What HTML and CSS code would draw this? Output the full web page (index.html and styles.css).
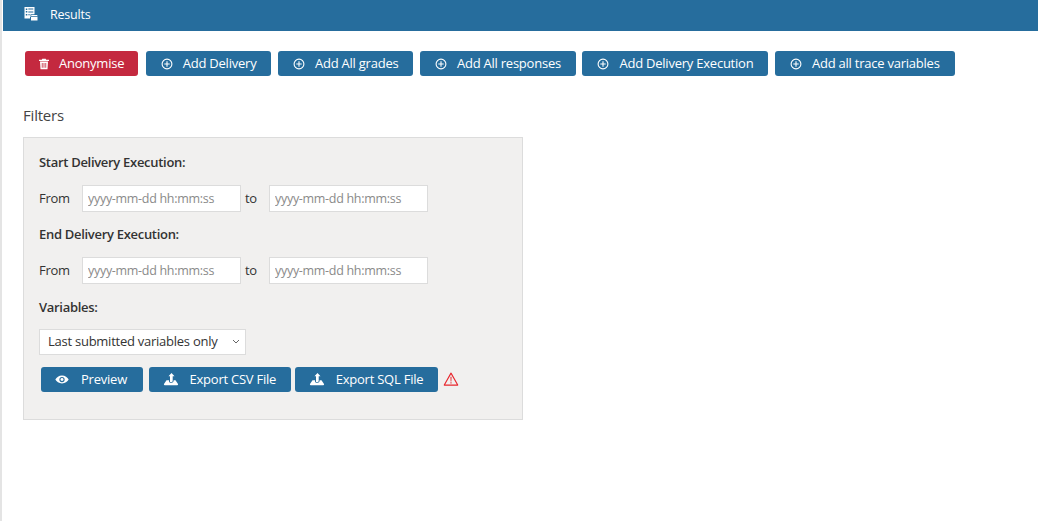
FILE: index.html
```html
<!DOCTYPE html>
<html lang="en">
<head>
<meta charset="utf-8">
<title>Results</title>
<link rel="stylesheet" href="styles.css">
</head>
<body>
<div class="page">
  <header class="bar">
    <svg class="bar-icon" viewBox="0 0 14 14" width="14" height="14"><path fill="#fff" fill-rule="evenodd" d="M.5 0h10v7.200H6.500V10H6v1.500H.5zM1.800 1.400v1.500h1.500V1.400zm2.500.2v1h5v-1zM1.800 4.100v1.500h1.500V4.100zm2.500.3v1h5v-1zM1.800 6.900v1.500h1.500V6.900zm2.500.3v1h1.500v-1z"/><path fill="#fff" d="M7.500 8h5.500l.8 1.300H6.800zM7 10h6.500v3.500H7z"/></svg>
    <span>Results</span>
  </header>
  <main class="content">
    <div class="actions">
      <button class="btn btn-danger"><svg class="ico" viewBox="0 0 12 12"><path fill="currentColor" d="M4.300 .8h3.400l.5 1H11v1.100H1V1.800h2.800zM2 3.600h8l-.5 7.600H2.500zm1.800 1.300v4.900h.8V4.900zm1.800 0v4.900h.8V4.900zm1.800 0v4.900h.8V4.900z"/></svg><span>Anonymise</span></button>
      <button class="btn"><svg class="ico" viewBox="0 0 12 12"><use href="#plus"/></svg><span>Add Delivery</span></button>
      <button class="btn"><svg class="ico" viewBox="0 0 12 12"><use href="#plus"/></svg><span>Add All grades</span></button>
      <button class="btn"><svg class="ico" viewBox="0 0 12 12"><use href="#plus"/></svg><span>Add All responses</span></button>
      <button class="btn"><svg class="ico" viewBox="0 0 12 12"><use href="#plus"/></svg><span>Add Delivery Execution</span></button>
      <button class="btn"><svg class="ico" viewBox="0 0 12 12"><use href="#plus"/></svg><span>Add all trace variables</span></button>
    </div>
    <h2 class="title">Filters</h2>
    <form class="panel">
      <div class="label">Start Delivery Execution:</div>
      <div class="range">
        <span class="from">From</span><input class="date" placeholder="yyyy-mm-dd hh:mm:ss"><span class="to">to</span><input class="date" placeholder="yyyy-mm-dd hh:mm:ss">
      </div>
      <div class="label">End Delivery Execution:</div>
      <div class="range">
        <span class="from">From</span><input class="date" placeholder="yyyy-mm-dd hh:mm:ss"><span class="to">to</span><input class="date" placeholder="yyyy-mm-dd hh:mm:ss">
      </div>
      <div class="label label-vars">Variables:</div>
      <div class="select"><span>Last submitted variables only</span><svg viewBox="0 0 8 5" width="8" height="5"><path fill="none" stroke="#666" stroke-width="1" d="M1 1l3 3 3-3"/></svg></div>
      <div class="exports">
        <button type="button" class="btn btn-preview"><svg class="ico ico-eye" viewBox="0 0 16 12"><path fill="currentColor" fill-rule="evenodd" d="M8 1.500C4.500 1.500 1.800 3.700.4 6c1.400 2.300 4.100 4.500 7.600 4.500s6.200-2.200 7.600-4.500C14.200 3.700 11.500 1.500 8 1.500zM8 3a3 3 0 1 1 0 6 3 3 0 0 1 0-6z"/><circle cx="8" cy="6" r="1.700" fill="currentColor"/></svg><span>Preview</span></button>
        <button type="button" class="btn btn-export"><svg class="ico ico-wide" viewBox="0 0 16 13"><use href="#export"/></svg><span>Export CSV File</span></button>
        <button type="button" class="btn btn-export"><svg class="ico ico-wide" viewBox="0 0 16 13"><use href="#export"/></svg><span>Export SQL File</span></button>
        <svg class="warn" viewBox="0 0 16 15" width="16" height="14"><path fill="none" stroke="#e8262d" stroke-width="1.200" stroke-linejoin="round" d="M8 1.200L15.200 14H.8z"/><path fill="#e8262d" d="M7.400 5.200h1.200l-.2 5H7.600zM7.400 11h1.200v1.200H7.400z"/></svg>
      </div>
    </form>
  </main>
</div>
<svg class="defs" width="0" height="0">
  <defs>
    <g id="plus"><circle cx="6" cy="6" r="4.900" fill="none" stroke="currentColor" stroke-width="1.100"/><path stroke="currentColor" stroke-width="1.100" d="M6 3.300v5.400M3.300 6h5.400"/></g>
    <g id="export"><path fill="currentColor" d="M8.500 0l3 3.200H9.700v4.300c0 1-.5 1.500-1.400 1.500H7V3.200H5.500z"/><path fill="currentColor" d="M3.500 7.300H6V8c0 1 .6 1.800 1.700 1.800h.9c1.200 0 2-.8 2-2v-.5h1.900L15 11c.2.500 0 1.200-.7 1.200H1.700c-.7 0-.9-.7-.7-1.200z"/></g>
  </defs>
</svg>
</body>
</html>
```
FILE: styles.css
```css
* { box-sizing: border-box; }
html, body { margin: 0; padding: 0; background: #fff; }
body { font-family: "Open Sans", "Noto Sans", sans-serif; color: #333; font-size: 13px; }
.page { min-height: 521px; border-left: 2px solid #e4e4e4; }
.bar { height: 31px; margin-left: 1px; background: #266d9d; color: #fff; display: flex; align-items: center; padding: 0 0 3px 21px; font-size: 12.5px; gap: 12px; letter-spacing: -.2px; }
.bar-icon { display: block; }
.content { padding: 20px 0 0 21px; }
.actions { display: flex; gap: 6.5px; padding-left: 2px; }
.btn { height: 25px; border: 0; border-radius: 3px; background: #266d9d; color: #fff; font: 13px "Open Sans", sans-serif; letter-spacing: -.23px; display: flex; align-items: center; padding: 0 15px 2px; gap: 10px; white-space: nowrap; }
.btn .ico { margin-top: 2px; }
.btn-danger { background: #c4293f; padding-left: 13px; padding-right: 14px; gap: 9px; margin-right: 1px; }
.ico { width: 12px; height: 12px; display: block; }
.ico-wide { width: 16px; height: 13px; }
.ico-eye { width: 14px; height: 11px; }
.title { margin: 30px 0 13px; font-size: 15px; font-weight: 400; line-height: 18px; letter-spacing: -.2px; color: #444; }
.panel { width: 500px; height: 283px; background: #f1f0ef; border: 1px solid #dcdcdc; padding: 15px 15px 0; }
.label { font-weight: 600; line-height: 18px; letter-spacing: -.3px; color: #333; }
.label-vars { margin-top: 14px; }
.range { display: flex; align-items: center; margin: 14px 0 13px; height: 27px; }
.range:has(+ .label-vars) { margin-bottom: 0; }
.from { width: 43px; letter-spacing: -.3px; padding-bottom: 2px; }
.to { width: 28px; padding: 0 0 2px 4px; letter-spacing: -.3px; }
.date { width: 159px; height: 27px; border: 1px solid #dcdcdc; background: #fff; padding: 0 5px; font: 12.5px "Open Sans", sans-serif; letter-spacing: -.3px; outline: 0; }
.date::placeholder { color: #8a8a8a; opacity: 1; }
.select { width: 207px; height: 26px; margin-top: 13px; background: #fff; border: 1px solid #dcdcdc; display: flex; align-items: center; justify-content: space-between; padding: 0 5px 2px 8px; letter-spacing: -.25px; }
.exports { display: flex; align-items: center; margin: 12px 0 0 2px; gap: 4px; }
.btn-preview { width: 102px; padding-left: 14px; margin-right: 2px; gap: 12px; }
.btn-export { padding-left: 14px; gap: 10.5px; }
.warn { display: block; margin: -2px 0 0 1px; }
.defs { position: absolute; }
```
